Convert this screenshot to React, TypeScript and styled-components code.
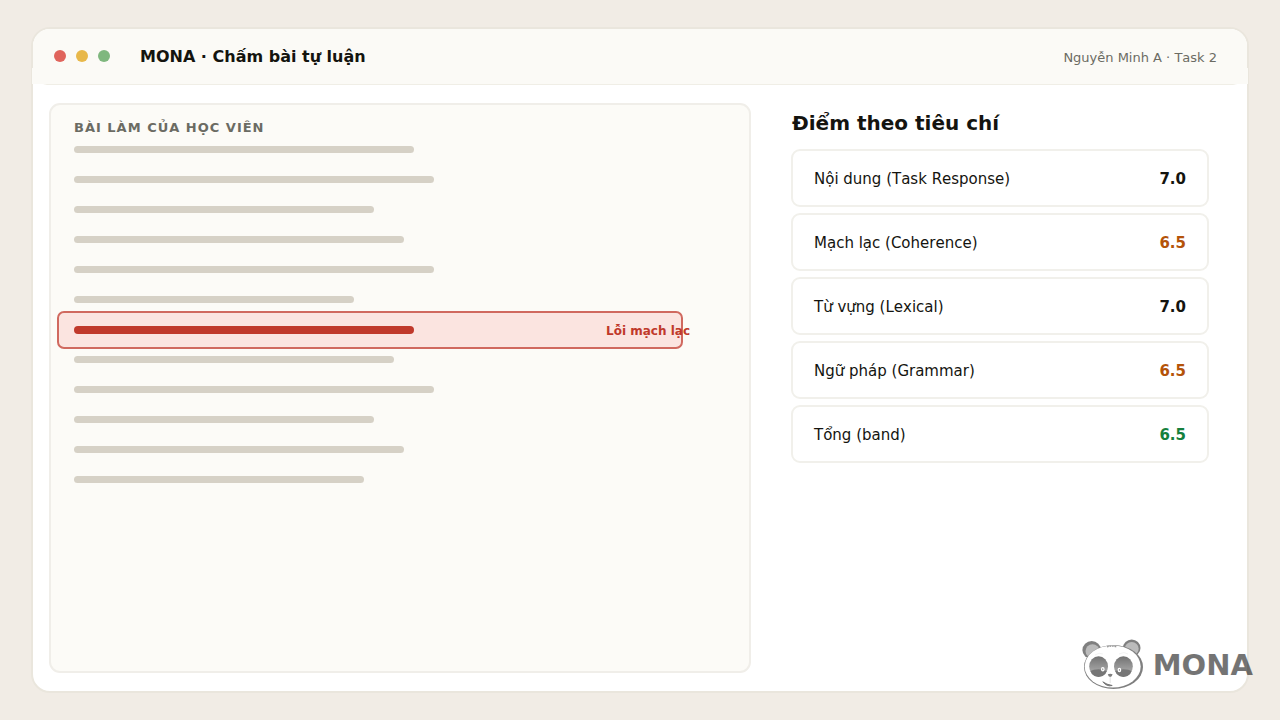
import React from "react";
import styled, { createGlobalStyle } from "styled-components";

const GlobalStyle = createGlobalStyle`
  * { box-sizing: border-box; }
  body {
    margin: 0;
    background: #f1ece5;
    color: #14140f;
    font-family: "DejaVu Sans", Verdana, sans-serif;
    font-kerning: none;
  }
`;

const Page = styled.div`
  position: relative;
  display: flex;
  min-height: 100vh;
  padding: 27px 31px;
`;

const Window = styled.main`
  flex: 1;
  display: flex;
  flex-direction: column;
  min-width: 0;
  background: #ffffff;
  border: 2px solid #eae6dd;
  border-radius: 19px;
`;

const TitleBar = styled.header`
  position: relative;
  display: flex;
  align-items: center;
  height: 56px;
  padding: 0 30px 2px 21px;
  background: #fbfaf6;
  border-radius: 17px 17px 0 0;

  &::before {
    content: "";
    position: absolute;
    left: -1px;
    right: -1px;
    bottom: 1px;
    height: 16px;
    background: #fbfaf6;
  }

  &::after {
    content: "";
    position: absolute;
    left: 0;
    right: 0;
    bottom: 0;
    height: 1px;
    background: linear-gradient(90deg, #ffffff 10px, #f0eee6 14px, #f0eee6 calc(100% - 14px), #ffffff calc(100% - 10px));
  }
`;

const Dots = styled.div`
  display: flex;
  gap: 10px;
  width: 86px;
`;

const Dot = styled.span<{ $color: string }>`
  width: 12px;
  height: 12px;
  border-radius: 50%;
  background: ${(p) => p.$color};
`;

const Title = styled.h1`
  flex: 1;
  margin: 0;
  padding-top: 2px;
  font-size: 16px;
  line-height: 20px;
`;

const Student = styled.span`
  position: relative;
  padding-top: 4px;
  font-size: 13px;
  line-height: 16px;
  color: #6b6b63;
`;

const Content = styled.div`
  flex: 1;
  display: grid;
  grid-template-columns: 702fr 418fr;
  gap: 40px;
  padding: 18px 38px 18px 16px;
`;

const Essay = styled.section`
  padding: 14px 23px;
  background: #fcfbf7;
  border: 2px solid #f0eee9;
  border-radius: 11px;
`;

const EssayTitle = styled.h2`
  margin: 0;
  padding-top: 2px;
  font-size: 13px;
  line-height: 14px;
  height: 15px;
  letter-spacing: 1px;
  color: #6b6b63;
`;

const Line = styled.div`
  display: flex;
  align-items: center;
  height: 30px;
`;

const Bar = styled.span<{ $width: number; $error?: boolean }>`
  flex: none;
  width: ${(p) => p.$width}px;
  height: ${(p) => (p.$error ? 8 : 7)}px;
  border-radius: 4px;
  background: ${(p) => (p.$error ? "#c0392b" : "#d6d1c6")};
`;

const ErrorLine = styled(Line)`
  justify-content: space-between;
  height: 38px;
  margin: -3px 43px -5px -17px;
  padding-left: 15px;
  background: #fbe4e0;
  border: 2px solid #d0695f;
  border-radius: 7px;
`;

const ErrorLabel = styled.strong`
  margin-right: -9px;
  padding-top: 2px;
  font-size: 12px;
  line-height: 16px;
  white-space: nowrap;
  color: #c0392b;
`;

const ScoresTitle = styled.h2`
  margin: 7px 0 13px 1px;
  font-size: 20px;
  line-height: 26px;
`;

const ScoreList = styled.dl`
  display: grid;
  gap: 6px;
  margin: 0;
`;

const ScoreCard = styled.div`
  display: flex;
  align-items: center;
  justify-content: space-between;
  height: 58px;
  padding: 2px 21px 0 21px;
  border: 2px solid #f1f0eb;
  border-radius: 9px;
  font-size: 15px;
  line-height: 20px;
`;

const Criterion = styled.dt``;

const Score = styled.dd<{ $color: string }>`
  margin: 0;
  font-weight: bold;
  color: ${(p) => p.$color};
`;

const Brand = styled.div`
  position: absolute;
  right: 27px;
  bottom: 26px;
  display: flex;
  align-items: center;
  gap: 7px;
  font-size: 29px;
  line-height: 36px;
  font-weight: bold;
  color: #111111;
  opacity: 0.58;
`;

const Panda = () => (
  <svg width="65" height="58" viewBox="0 0 65 58" aria-hidden="true">
    <defs>
      <linearGradient id="patch" x1="0" y1="0" x2="0" y2="1">
        <stop offset="0" stopColor="#0c0c0c" />
        <stop offset="0.75" stopColor="#6c6c6c" />
      </linearGradient>
      <clipPath id="patchLeft"><ellipse cx="17.6" cy="30.6" rx="9.4" ry="10.3" /></clipPath>
      <clipPath id="patchRight"><ellipse cx="42.4" cy="30.6" rx="9.4" ry="10.3" /></clipPath>
    </defs>
    <ellipse cx="10.7" cy="14" rx="9.3" ry="9" fill="#242424" />
    <ellipse cx="11.5" cy="15" rx="7" ry="6.8" fill="#8b8b8b" />
    <ellipse cx="50.7" cy="12" rx="8.8" ry="8.6" fill="#242424" />
    <ellipse cx="50.7" cy="12.7" rx="7" ry="6.8" fill="#8b8b8b" />
    <ellipse cx="32.5" cy="31" rx="29.5" ry="22" fill="#242424" />
    <ellipse cx="31.7" cy="30.5" rx="28" ry="21.1" fill="#ffffff" />
    <g clipPath="url(#patchLeft)">
      <rect x="8" y="20" width="20" height="22" fill="url(#patch)" />
      <path d="M7 36 Q17.5 30.5 28 36 V42 H7Z" fill="#141414" />
    </g>
    <g clipPath="url(#patchRight)">
      <rect x="33" y="20" width="20" height="22" fill="url(#patch)" />
      <path d="M32 36 Q42.5 30.5 53 36 V42 H32Z" fill="#141414" />
    </g>
    <ellipse cx="21.8" cy="33.3" rx="1.2" ry="1.6" fill="#333333" stroke="#ffffff" strokeWidth="1.3" />
    <ellipse cx="38.4" cy="33.9" rx="1.2" ry="1.6" fill="#333333" stroke="#ffffff" strokeWidth="1.3" />
    <path d="M26.8 38.3 Q29.2 37 31.6 38.3 Q31 40.9 29.2 40.9 Q27.4 40.9 26.8 38.3Z" fill="#242424" />
    <path d="M29.2 41v6" stroke="#b0b0b0" strokeWidth="0.6" />
    <path d="M21.8 45.8 Q25.5 48.6 31.2 49.5 Q25.8 51 21.8 45.8Z" fill="#111111" stroke="#111111" strokeWidth="0.9" />
    <path d="M26 10.8 Q31 9.5 36 10.8" fill="none" stroke="#505050" strokeWidth="1.2" strokeDasharray="1.8 0.7" />
    <path d="M14 19q4-3 8-1M38 18q5-3 9 0" fill="none" stroke="#dddddd" strokeWidth="0.6" />
  </svg>
);

const before = [340, 360, 300, 330, 360, 280];
const after = [320, 360, 300, 330, 290];

const scores = [
  { name: "Nội dung (Task Response)", value: "7.0", color: "#14140f" },
  { name: "Mạch lạc (Coherence)", value: "6.5", color: "#b45309" },
  { name: "Từ vựng (Lexical)", value: "7.0", color: "#14140f" },
  { name: "Ngữ pháp (Grammar)", value: "6.5", color: "#b45309" },
  { name: "Tổng (band)", value: "6.5", color: "#15803d" },
];

export default function App() {
  return (
    <Page>
      <GlobalStyle />
      <Window>
        <TitleBar>
          <Dots>
            <Dot $color="#e0645c" />
            <Dot $color="#e8b84a" />
            <Dot $color="#7fb77e" />
          </Dots>
          <Title>MONA · Chấm bài tự luận</Title>
          <Student>Nguyễn Minh A · Task 2</Student>
        </TitleBar>
        <Content>
          <Essay>
            <EssayTitle>BÀI LÀM CỦA HỌC VIÊN</EssayTitle>
            {before.map((w, i) => (
              <Line key={i}><Bar $width={w} /></Line>
            ))}
            <ErrorLine>
              <Bar $width={340} $error />
              <ErrorLabel>Lỗi mạch lạc</ErrorLabel>
            </ErrorLine>
            {after.map((w, i) => (
              <Line key={i}><Bar $width={w} /></Line>
            ))}
          </Essay>
          <section>
            <ScoresTitle>Điểm theo tiêu chí</ScoresTitle>
            <ScoreList>
              {scores.map((s) => (
                <ScoreCard key={s.name}>
                  <Criterion>{s.name}</Criterion>
                  <Score $color={s.color}>{s.value}</Score>
                </ScoreCard>
              ))}
            </ScoreList>
          </section>
        </Content>
      </Window>
      <Brand>
        <Panda />
        <span>MONA</span>
      </Brand>
    </Page>
  );
}
